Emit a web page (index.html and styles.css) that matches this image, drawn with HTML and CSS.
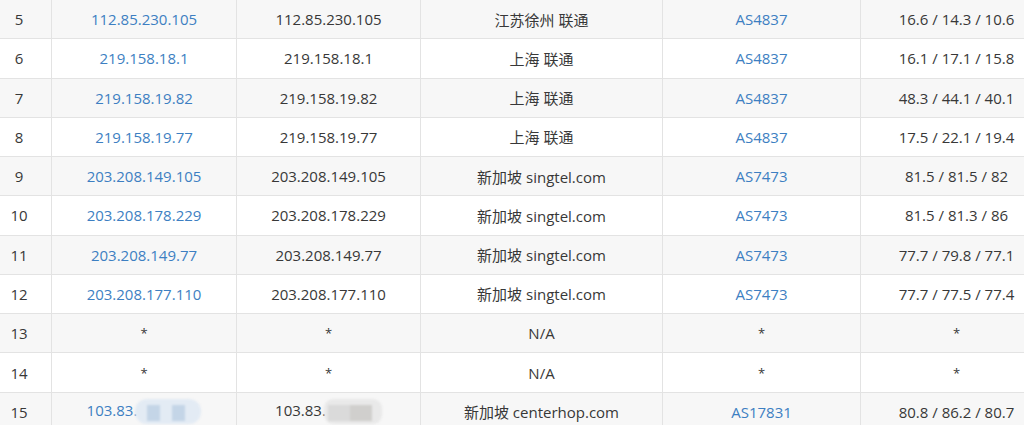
FILE: index.html
```html
<!DOCTYPE html>
<html lang="en">
<head>
    <meta charset="UTF-8">
    <meta name="viewport" content="width=device-width, initial-scale=1.0">
    <title>Traceroute</title>
    <link rel="stylesheet" href="styles.css">
</head>
<body>

<div class="wrap">
    <table class="trace">
        <colgroup>
            <col class="c-hop">
            <col class="c-ip">
            <col class="c-host">
            <col class="c-geo">
            <col class="c-as">
            <col class="c-rtt">
        </colgroup>
        <tbody>
            <tr><td>5</td><td><a href="#">112.85.230.105</a></td><td>112.85.230.105</td><td>江苏徐州 联通</td><td><a href="#">AS4837</a></td><td>16.6 / 14.3 / 10.6</td></tr>
            <tr><td>6</td><td><a href="#">219.158.18.1</a></td><td>219.158.18.1</td><td>上海 联通</td><td><a href="#">AS4837</a></td><td>16.1 / 17.1 / 15.8</td></tr>
            <tr><td>7</td><td><a href="#">219.158.19.82</a></td><td>219.158.19.82</td><td>上海 联通</td><td><a href="#">AS4837</a></td><td>48.3 / 44.1 / 40.1</td></tr>
            <tr><td>8</td><td><a href="#">219.158.19.77</a></td><td>219.158.19.77</td><td>上海 联通</td><td><a href="#">AS4837</a></td><td>17.5 / 22.1 / 19.4</td></tr>
            <tr><td>9</td><td><a href="#">203.208.149.105</a></td><td>203.208.149.105</td><td>新加坡 singtel.com</td><td><a href="#">AS7473</a></td><td>81.5 / 81.5 / 82</td></tr>
            <tr><td>10</td><td><a href="#">203.208.178.229</a></td><td>203.208.178.229</td><td>新加坡 singtel.com</td><td><a href="#">AS7473</a></td><td>81.5 / 81.3 / 86</td></tr>
            <tr><td>11</td><td><a href="#">203.208.149.77</a></td><td>203.208.149.77</td><td>新加坡 singtel.com</td><td><a href="#">AS7473</a></td><td>77.7 / 79.8 / 77.1</td></tr>
            <tr><td>12</td><td><a href="#">203.208.177.110</a></td><td>203.208.177.110</td><td>新加坡 singtel.com</td><td><a href="#">AS7473</a></td><td>77.7 / 77.5 / 77.4</td></tr>
            <tr><td>13</td><td class="star">*</td><td class="star">*</td><td>N/A</td><td class="star">*</td><td class="star">*</td></tr>
            <tr><td>14</td><td class="star">*</td><td class="star">*</td><td>N/A</td><td class="star">*</td><td class="star">*</td></tr>
            <tr>
                <td>15</td>
                <td><a href="#">103.83.</a><span class="mosaic blue"><i></i><i></i></span></td>
                <td>103.83.<span class="mosaic grey"><i></i><i></i></span></td>
                <td>新加坡 centerhop.com</td>
                <td><a href="#">AS17831</a></td>
                <td>80.8 / 86.2 / 80.7</td>
            </tr>
        </tbody>
    </table>
</div>

</body>
</html>
```

FILE: styles.css
```css
body {
    margin: 0;
    background-color: #fff;
    font-family: "Open Sans", "Noto Sans CJK SC", sans-serif;
    font-size: 15px;
    color: #383838;
    overflow: hidden;
}
.wrap {
    width: 1024px;
    height: 425px;
    overflow: hidden;
}
.trace {
    border-collapse: collapse;
    table-layout: fixed;
    width: 1066px;
    margin-left: -14px;
    margin-top: -1px;
}
.c-hop { width: 65px; }
.c-ip { width: 185px; }
.c-host { width: 184px; }
.c-geo { width: 242px; }
.c-as { width: 198px; }
.c-rtt { width: 192px; }
.trace tr {
    height: 39.27px;
}
.trace tr:nth-child(odd) {
    background-color: #f7f7f7;
}
.trace td {
    border: 1px solid #e3e3e3;
    text-align: center;
    padding: 0;
    white-space: nowrap;
}
.trace a {
    color: #3d7fc2;
    text-decoration: none;
}
.star {
    font-size: 13px;
}
.mosaic {
    display: inline-flex;
    align-items: flex-start;
    gap: 12px;
    width: 66px;
    height: 25px;
    padding: 6px 0 0 12px;
    box-sizing: border-box;
    border-radius: 12px;
    vertical-align: middle;
    margin-left: -2px;
    filter: blur(1px);
}
.mosaic i {
    display: block;
    width: 13px;
    height: 16px;
}
.mosaic.blue { background-color: #e3ebf4; }
.mosaic.blue i { background-color: #c4d5e7; }
.mosaic.grey { width: 58px; gap: 0; padding-left: 4px; background-color: #e9e9e9; border-radius: 9px; }
.mosaic.grey i { width: 22px; background-color: #dadada; }
.mosaic.grey i + i { background-color: #d0cfcd; }
```
